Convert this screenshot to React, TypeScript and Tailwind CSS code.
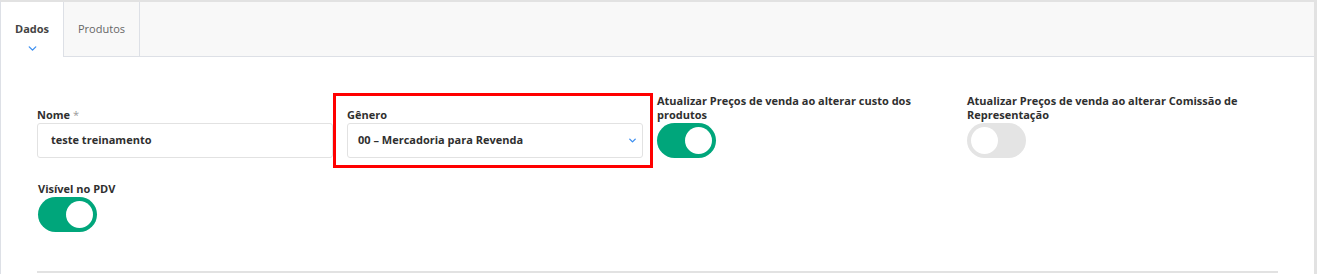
import { ChevronDown } from 'lucide-react'

function Toggle({ on }: { on: boolean }) {
  return (
    <div className={`w-[59px] h-[35px] rounded-full flex items-center px-[4px] ${on ? 'bg-[#00a67b] justify-end' : 'bg-[#e4e4e4] justify-start'}`}>
      <div className="w-[27px] h-[27px] rounded-full bg-white" />
    </div>
  )
}

export default function App() {
  return (
    <div className="w-[1317px] h-[274px] bg-white overflow-hidden flex text-[#2f2f2f]"
      style={{ fontFamily: "'Open Sans', 'Liberation Sans', sans-serif" }}>
      <div className="flex-1 flex flex-col border-t-2 border-t-[#e2e2e2] border-l border-l-[#dde0e6]">
        {/* Tabs */}
        <div className="h-[55px] flex bg-[#f8f8f8] border-b border-[#dde0e6] shrink-0">
          <div className="w-[63px] bg-white border-r border-[#dde0e6] flex flex-col items-center pt-[19px] -mb-px">
            <span className="text-[11px] font-[750] text-[#444]">Dados</span>
            <ChevronDown className="w-[13px] h-[13px] text-[#3d8ff0] mt-[4px]" strokeWidth={2.5} />
          </div>
          <div className="w-[76px] border-r border-[#dde0e6] flex justify-center pt-[19px]">
            <span className="text-[11px] text-[#666]">Produtos</span>
          </div>
        </div>

        {/* Form */}
        <div className="pl-[36px] pt-[37px]">
          <div className="grid grid-cols-[310px_310px_310px_310px] w-[1241px]">
            <div className="pr-[14px] flex flex-col justify-end">
              <label className="text-[11px] font-[750] leading-[14px] mb-px">
                Nome <span className="text-[#999] font-normal">*</span>
              </label>
              <div className="h-[35px] border border-[#e2e2e2] rounded-[3px] flex items-center px-[13px] text-[11px] font-[750]">
                teste treinamento
              </div>
            </div>
            <div className="pr-[14px] flex flex-col justify-end relative">
              <div className="absolute left-[-14px] top-[-1px] w-[320px] h-[75px] border-[3px] border-[#ff0000]" />
              <label className="text-[11px] font-[750] leading-[14px] mb-px">Gênero</label>
              <div className="h-[35px] border border-[#e2e2e2] rounded-[3px] flex items-center justify-between pl-[10px] pr-[4px] text-[11px] font-[750]">
                <span>00 – Mercadoria para Revenda</span>
                <ChevronDown className="w-[11px] h-[11px] text-[#3d8ff0]" strokeWidth={3} />
              </div>
            </div>
            <div className="pr-[14px] flex flex-col">
              <label className="text-[11px] font-[750] leading-[14px] mb-px">
                Atualizar Preços de venda ao alterar custo dos produtos
              </label>
              <Toggle on />
            </div>
            <div className="pr-[14px] flex flex-col">
              <label className="text-[11px] font-[750] leading-[14px] mb-px">
                Atualizar Preços de venda ao alterar Comissão de Representação
              </label>
              <Toggle on={false} />
            </div>
          </div>

          <div className="flex flex-col mt-[24px] pl-px">
            <label className="text-[11px] font-[750] leading-[14px] mb-px">Visível no PDV</label>
            <Toggle on />
          </div>

          <div className="w-[1241px] border-b-2 border-[#e2e2e2] mt-[39px]" />
        </div>
      </div>
      <div className="w-[3px] bg-[#e2e2e2]" />
    </div>
  )
}
